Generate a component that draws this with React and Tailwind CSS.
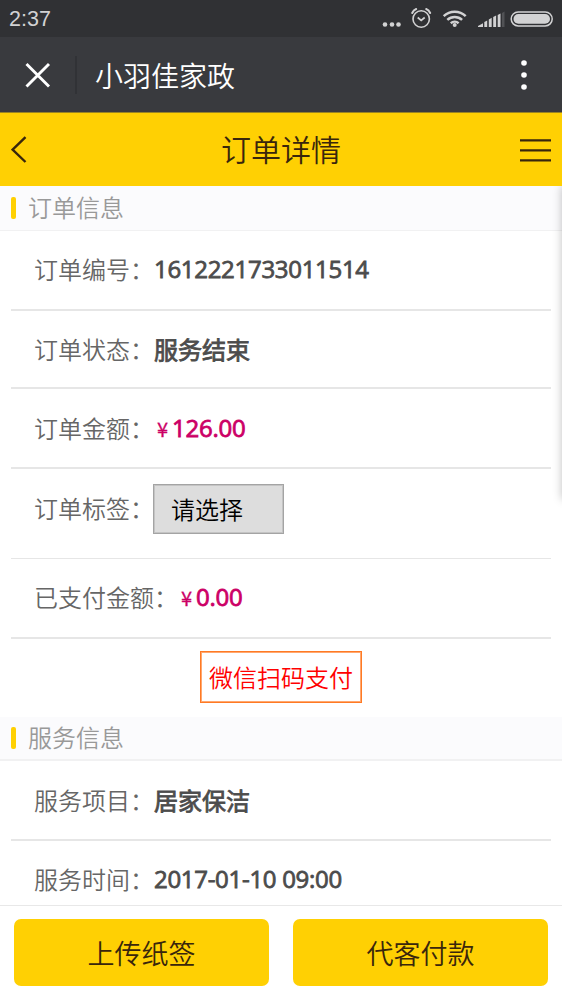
import React from "react";

function StatusBar() {
  return (
    <div className="flex h-[37px] shrink-0 items-center justify-between bg-[#303134] pl-[9px] pr-[9px] text-[#d2d2d3]">
      <span className="pt-[3px] font-['Liberation_Sans',sans-serif] text-[21.5px] leading-none">2:37</span>
      <svg width="171" height="37" viewBox="0 0 171 37" fill="none">
        <g fill="#d2d2d3">
          <circle cx="3" cy="24.5" r="2.3" />
          <circle cx="10" cy="24.5" r="2.3" />
          <circle cx="16.5" cy="24.5" r="2.3" />
        </g>
        <g stroke="#d2d2d3" strokeLinecap="round">
          <circle cx="39.2" cy="19" r="8.2" strokeWidth="1.6" />
          <path d="M35.7 17.5l3.5 3 3.5-3" strokeWidth="1.7" strokeLinecap="butt" />
          <path d="M30.2 13q1.3-3 4-4M44.2 9q2.7 1 4 4" strokeWidth="2" />
        </g>
        <g stroke="#d2d2d3" strokeWidth="2.5">
          <path d="M61.7 16.2a16 16 0 0 1 22 0" />
          <path d="M65.3 19.8a11 11 0 0 1 14.8 0" />
          <path d="M68.8 23.2a6 6 0 0 1 7.8 0" />
        </g>
        <circle cx="72.7" cy="25" r="2" fill="#d2d2d3" />
        <g fill="#d2d2d3">
          <path d="M96 27v-1l5-2.7V27z" />
          <path d="M102.3 27v-5l2.9-1.5V27z" />
          <path d="M106.8 27v-7.5l2.9-1.7V27z" />
          <path d="M111.2 27v-10l2.9-1.6V27z" />
          <path d="M115.7 27V15l2.8-1.6V27z" />
        </g>
        <path d="M120 27V13l2.5-1.5V27z" fill="#515255" />
        <rect x="129.2" y="11.9" width="41" height="14" rx="7" stroke="#d2d2d3" strokeWidth="1.5" />
        <rect x="131.5" y="14" width="36.5" height="9.8" rx="4.9" fill="#d2d2d3" />
      </svg>
    </div>
  );
}

function AppBar() {
  return (
    <div className="flex h-[75px] shrink-0 items-center bg-[#393a3e] pl-[25px] pr-[35px]">
      <svg width="26" height="26" viewBox="0 0 26 26" stroke="#fff" strokeWidth="2.9">
        <path d="M1.5 2l22.5 22.5M24 2L1.5 24.5" />
      </svg>
      <div className="ml-[24px] h-[38px] w-[2px] bg-[#313236]" />
      <h1 className="ml-[18px] flex-1 text-[28px] font-[350] leading-none text-white">小羽佳家政</h1>
      <svg width="6" height="32" viewBox="0 0 6 32" fill="#fff">
        <circle cx="3" cy="4" r="2.8" />
        <circle cx="3" cy="16" r="2.8" />
        <circle cx="3" cy="28" r="2.8" />
      </svg>
    </div>
  );
}

function TitleBar() {
  return (
    <div className="flex h-[74px] shrink-0 items-center justify-between border-t border-[#9a8424] bg-[#ffd003] px-[11px] text-[#39260c]">
      <svg className="w-[31px]" height="28" viewBox="0 0 31 28" fill="none" stroke="currentColor" strokeWidth="2.4">
        <path d="M14.5 1.2L1.6 13.6l12.9 12.4" />
      </svg>
      <h2 className="pb-[3px] text-[30px] font-[350] leading-none">订单详情</h2>
      <svg width="31" height="24" viewBox="0 0 31 24" stroke="currentColor" strokeWidth="2.2">
        <path d="M0 2.3h31M0 12.3h31M0 22.3h31" />
      </svg>
    </div>
  );
}

function SectionHeader({ title, className }) {
  return (
    <div className={"flex items-center border-[#f1f1f2] bg-[#fbfbfd] pl-[11px] " + className}>
      <span className="h-[22px] w-[5px] rounded-[2px] bg-[#ffd003]" />
      <span className="ml-[12px] pb-[3px] text-[24px] font-[350] leading-none text-[#999]">{title}</span>
    </div>
  );
}

function Row({ label, className, children }) {
  return (
    <div className={"mx-[11px] flex items-center border-[#e6e6e6] pl-[23px] text-[24px] leading-none " + className}>
      <span className="font-[350] text-[#666]">{label}：</span>
      {children}
    </div>
  );
}

function Value({ children }) {
  return (
    <span className="font-['Open_Sans','Noto_Sans_CJK_SC',sans-serif] tracking-[-0.3px] text-[#4c4c4c] [-webkit-text-stroke:0.8px_#4c4c4c]">
      {children}
    </span>
  );
}

function TextValue({ children }) {
  return (
    <span className="text-[#4c4c4c] [-webkit-text-stroke:0.8px_#4c4c4c]">
      {children}
    </span>
  );
}

function Price({ children }) {
  return (
    <span className="flex items-baseline font-['Open_Sans','Noto_Sans_CJK_SC',sans-serif] tracking-[-0.25px] text-[#cc0066] [-webkit-text-stroke:0.8px_#cc0066]">
      <span className="w-[18px] pl-[3px] font-['Noto_Sans_CJK_SC',sans-serif] text-[20px] [-webkit-text-stroke:0.3px_#cc0066]">¥</span>
      {children}
    </span>
  );
}

function ActionButton({ children }) {
  return (
    <button className="h-[67px] flex-1 rounded-[7px] bg-[#ffd003] text-[27px] font-[350] leading-none text-[#39260c]">
      {children}
    </button>
  );
}

export default function App() {
  return (
    <div className="flex h-[1000px] w-[562px] flex-col overflow-hidden bg-white font-['Noto_Sans_CJK_SC',sans-serif]">
      <StatusBar />
      <AppBar />
      <TitleBar />
      <main className="relative h-[719px] shrink-0 overflow-hidden">
        <SectionHeader title="订单信息" className="h-[45px] border-b" />
        <Row label="订单编号" className="h-[80px] border-b-2 pb-[2px]">
          <Value>1612221733011514</Value>
        </Row>
        <Row label="订单状态" className="h-[78px] border-b-2">
          <TextValue>服务结束</TextValue>
        </Row>
        <Row label="订单金额" className="h-[80px] border-b-2">
          <Price>126.00</Price>
        </Row>
        <Row label="订单标签" className="h-[90px] border-b pb-[11px]">
          <button className="-ml-px mt-[2px] h-[50px] w-[131px] border border-[#a4a4a4] bg-[#ddd] pl-[17px] text-left font-[350] leading-none text-black shadow-[inset_0_0_0_1px_#c4c4c4]">
            请选择
          </button>
        </Row>
        <Row label="已支付金额" className="h-[80px] border-b-2 pb-[2px]">
          <Price>0.00</Price>
        </Row>
        <div className="flex h-[78px] items-start justify-center pt-[12px]">
          <button className="h-[52px] w-[162px] border border-[#ff7a24] text-[24px] font-[350] leading-none text-[#ff0000] shadow-[inset_0_0_0_1px_#ffa870]">
            微信扫码支付
          </button>
        </div>
        <SectionHeader title="服务信息" className="h-[44px] border-b-2" />
        <Row label="服务项目" className="h-[80px] border-b-2">
          <TextValue>居家保洁</TextValue>
        </Row>
        <Row label="服务时间" className="h-[75px]">
          <Value>2017-01-10 09:00</Value>
        </Row>
        <div className="absolute left-full top-0 h-[313px] w-[20px] shadow-[0_0_10px_rgba(0,0,0,0.25)]" />
      </main>
      <footer className="z-10 flex h-[95px] shrink-0 items-start gap-[24px] border-t border-[#e8e8e8] bg-white px-[14px] pt-[13px]">
        <ActionButton>上传纸签</ActionButton>
        <ActionButton>代客付款</ActionButton>
      </footer>
    </div>
  );
}
